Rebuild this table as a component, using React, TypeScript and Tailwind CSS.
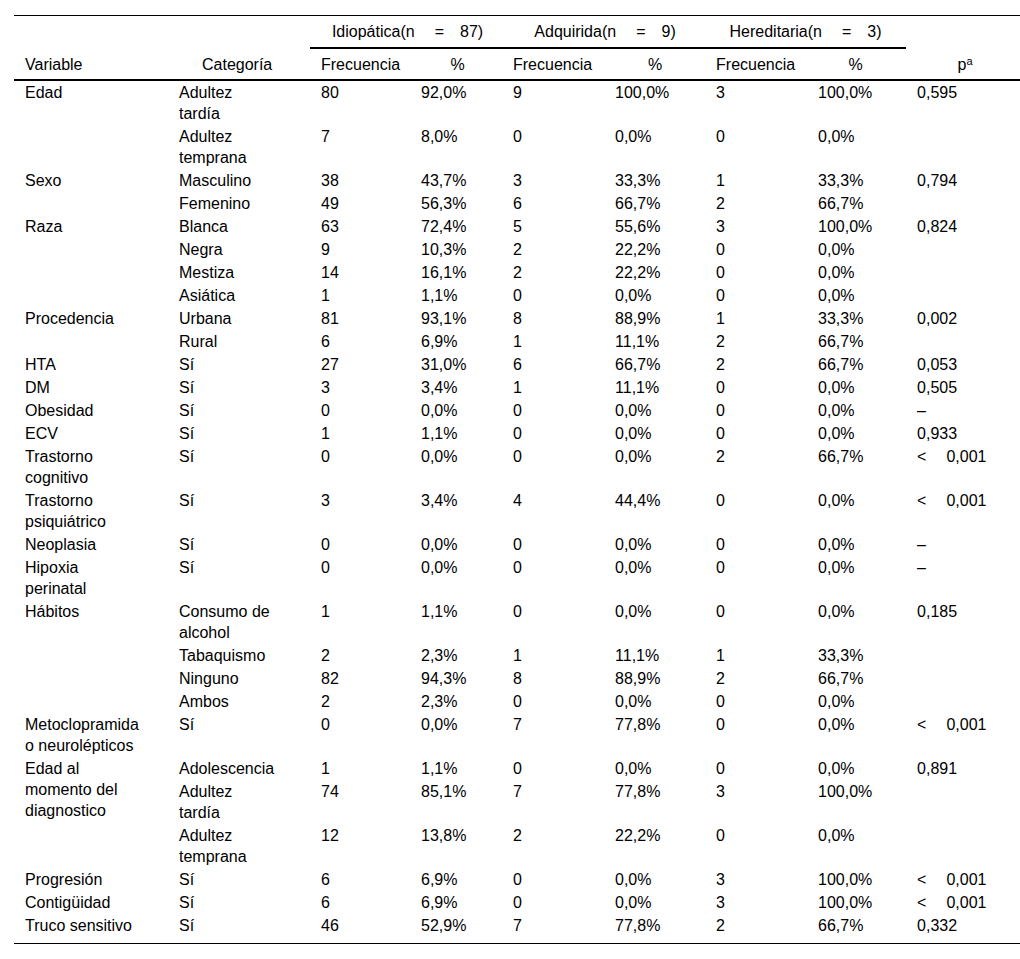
import React from "react";

type Row = {
  v?: string;
  span?: number;
  skip?: boolean;
  c: string;
  d: string[];
  p?: string;
};

const rows: Row[] = [
  { v: "Edad", c: "Adultez\ntardía", d: ["80", "92,0%", "9", "100,0%", "3", "100,0%"], p: "0,595" },
  { v: "", c: "Adultez\ntemprana", d: ["7", "8,0%", "0", "0,0%", "0", "0,0%"] },
  { v: "Sexo", c: "Masculino", d: ["38", "43,7%", "3", "33,3%", "1", "33,3%"], p: "0,794" },
  { v: "", c: "Femenino", d: ["49", "56,3%", "6", "66,7%", "2", "66,7%"] },
  { v: "Raza", c: "Blanca", d: ["63", "72,4%", "5", "55,6%", "3", "100,0%"], p: "0,824" },
  { v: "", c: "Negra", d: ["9", "10,3%", "2", "22,2%", "0", "0,0%"] },
  { v: "", c: "Mestiza", d: ["14", "16,1%", "2", "22,2%", "0", "0,0%"] },
  { v: "", c: "Asiática", d: ["1", "1,1%", "0", "0,0%", "0", "0,0%"] },
  { v: "Procedencia", c: "Urbana", d: ["81", "93,1%", "8", "88,9%", "1", "33,3%"], p: "0,002" },
  { v: "", c: "Rural", d: ["6", "6,9%", "1", "11,1%", "2", "66,7%"] },
  { v: "HTA", c: "Sí", d: ["27", "31,0%", "6", "66,7%", "2", "66,7%"], p: "0,053" },
  { v: "DM", c: "Sí", d: ["3", "3,4%", "1", "11,1%", "0", "0,0%"], p: "0,505" },
  { v: "Obesidad", c: "Sí", d: ["0", "0,0%", "0", "0,0%", "0", "0,0%"], p: "–" },
  { v: "ECV", c: "Sí", d: ["1", "1,1%", "0", "0,0%", "0", "0,0%"], p: "0,933" },
  { v: "Trastorno\ncognitivo", c: "Sí", d: ["0", "0,0%", "0", "0,0%", "2", "66,7%"], p: "<0,001" },
  { v: "Trastorno\npsiquiátrico", c: "Sí", d: ["3", "3,4%", "4", "44,4%", "0", "0,0%"], p: "<0,001" },
  { v: "Neoplasia", c: "Sí", d: ["0", "0,0%", "0", "0,0%", "0", "0,0%"], p: "–" },
  { v: "Hipoxia\nperinatal", c: "Sí", d: ["0", "0,0%", "0", "0,0%", "0", "0,0%"], p: "–" },
  { v: "Hábitos", c: "Consumo de\nalcohol", d: ["1", "1,1%", "0", "0,0%", "0", "0,0%"], p: "0,185" },
  { v: "", c: "Tabaquismo", d: ["2", "2,3%", "1", "11,1%", "1", "33,3%"] },
  { v: "", c: "Ninguno", d: ["82", "94,3%", "8", "88,9%", "2", "66,7%"] },
  { v: "", c: "Ambos", d: ["2", "2,3%", "0", "0,0%", "0", "0,0%"] },
  { v: "Metoclopramida\no neurolépticos", c: "Sí", d: ["0", "0,0%", "7", "77,8%", "0", "0,0%"], p: "<0,001" },
  { v: "Edad al\nmomento del\ndiagnostico", span: 3, c: "Adolescencia", d: ["1", "1,1%", "0", "0,0%", "0", "0,0%"], p: "0,891" },
  { skip: true, c: "Adultez\ntardía", d: ["74", "85,1%", "7", "77,8%", "3", "100,0%"] },
  { skip: true, c: "Adultez\ntemprana", d: ["12", "13,8%", "2", "22,2%", "0", "0,0%"] },
  { v: "Progresión", c: "Sí", d: ["6", "6,9%", "0", "0,0%", "3", "100,0%"], p: "<0,001" },
  { v: "Contigüidad", c: "Sí", d: ["6", "6,9%", "0", "0,0%", "3", "100,0%"], p: "<0,001" },
  { v: "Truco sensitivo", c: "Sí", d: ["46", "52,9%", "7", "77,8%", "2", "66,7%"], p: "0,332" },
];

// left padding of each data column, so text lines up with the reference
const dataPad = ["pl-[11px]", "pl-[11px]", "pl-[8px]", "pl-[10px]", "pl-[11px]", "pl-[13px]"];

const Group = ({ label, n }: { label: string; n: string }) => (
  <th colSpan={2} className="border-b-2 border-black pt-[5px] pb-[5px] text-center font-normal">
    {label}(n<span className="ml-[20px] mr-[16px]">=</span>{n})
  </th>
);

const PValue = ({ p }: { p?: string }) => {
  if (!p) return null;
  if (p.startsWith("<")) {
    return (
      <>
        <span className="mr-[20px]">&lt;</span>
        {p.slice(1)}
      </>
    );
  }
  return <>{p}</>;
};

export default function App() {
  const last = rows.length - 1;
  return (
    <div
      className="bg-white pt-[15px] pl-[14px] text-black text-[16px] leading-[21px]"
      style={{ fontFamily: '"Liberation Sans", Arial, sans-serif' }}
    >
      <table className="w-[1006px] table-fixed border-separate border-spacing-0 border-t border-b border-black">
        <colgroup>
          <col className="w-[157px]" />
          <col className="w-[139px]" />
          <col className="w-[100px]" />
          <col className="w-[95px]" />
          <col className="w-[100px]" />
          <col className="w-[100px]" />
          <col className="w-[100px]" />
          <col className="w-[101px]" />
          <col className="w-[114px]" />
        </colgroup>
        <thead>
          <tr>
            <th />
            <th />
            <Group label="Idiopática" n="87" />
            <Group label="Adquirida" n="9" />
            <Group label="Hereditaria" n="3" />
            <th />
          </tr>
          <tr className="[&>th]:border-b-2 [&>th]:border-black [&>th]:pt-[5px] [&>th]:pb-[4px] [&>th]:font-normal">
            <th className="pl-[11px] text-left">Variable</th>
            <th className="pl-[31px] text-left">Categoría</th>
            <th className="pl-[11px] text-left">Frecuencia</th>
            <th className="text-center">%</th>
            <th className="pl-[8px] text-left">Frecuencia</th>
            <th className="text-center">%</th>
            <th className="pl-[11px] text-left">Frecuencia</th>
            <th className="text-center">%</th>
            <th className="pl-[4px] text-center">
              p<sup className="text-[11px]">a</sup>
            </th>
          </tr>
        </thead>
        <tbody>
          {rows.map((r, i) => {
            const py = i === last ? "pt-[1px] pb-[7px]" : "py-[1px]";
            return (
              <tr key={i} className="align-top">
                {!r.skip && (
                  <td rowSpan={r.span} className={`${py} pl-[11px] whitespace-pre-line`}>
                    {r.v}
                  </td>
                )}
                <td className={`${py} pl-[8px] whitespace-pre-line`}>{r.c}</td>
                {r.d.map((x, j) => (
                  <td key={j} className={`${py} ${dataPad[j]}`}>
                    {x}
                  </td>
                ))}
                <td className={`${py} pl-[11px] whitespace-nowrap`}>
                  <PValue p={r.p} />
                </td>
              </tr>
            );
          })}
        </tbody>
      </table>
    </div>
  );
}
